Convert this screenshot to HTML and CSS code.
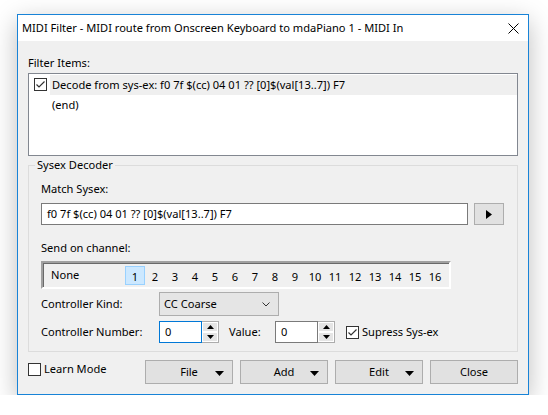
FILE: index.html
```html
<!DOCTYPE html>
<html lang="en">
  <head>
    <meta charset="UTF-8" />
    <title>MIDI Filter</title>
    <link rel="stylesheet" href="styles.css">
  </head>
  <body>
    <div class="dialog">
      <div class="titlebar">
        <span class="title">MIDI Filter - MIDI route from Onscreen Keyboard to mdaPiano 1 - MIDI In</span>
        <svg class="close-x" width="11" height="11" viewBox="0 0 11 11">
          <path d="M0.5 0.5L10.5 10.5M10.5 0.5L0.5 10.5" stroke="#000" stroke-width="1" fill="none" />
        </svg>
      </div>

      <div class="content">
        <div class="label first">Filter Items:</div>
        <div class="item-list">
          <div class="item">
            <span class="check">
              <svg width="13" height="13" viewBox="0 0 13 13"><path d="M2.5 6.5L5 9L10.5 3.5" stroke="#333" stroke-width="1.2" fill="none" /></svg>
            </span>
            <span class="item-text selected">Decode from sys-ex: f0 7f $(cc) 04 01 ?? [0]$(val[13..7]) F7</span>
          </div>
          <div class="item">
            <span class="check-space"></span>
            <span class="item-text">(end)</span>
          </div>
        </div>

        <fieldset class="group">
          <legend>Sysex Decoder</legend>

          <div class="label">Match Sysex:</div>
          <div class="match-row">
            <div class="textbox">f0 7f $(cc) 04 01 ?? [0]$(val[13..7]) F7</div>
            <button class="btn play">
              <svg width="6" height="9" viewBox="0 0 6 9"><path d="M0 0L6 4.5L0 9Z" fill="#000" /></svg>
            </button>
          </div>

          <div class="label channel-label">Send on channel:</div>
          <div class="channels">
            <span class="ch-none">None</span>
            <span class="ch active">1</span>
            <span class="ch">2</span>
            <span class="ch">3</span>
            <span class="ch">4</span>
            <span class="ch">5</span>
            <span class="ch">6</span>
            <span class="ch">7</span>
            <span class="ch">8</span>
            <span class="ch">9</span>
            <span class="ch">10</span>
            <span class="ch">11</span>
            <span class="ch">12</span>
            <span class="ch">13</span>
            <span class="ch">14</span>
            <span class="ch">15</span>
            <span class="ch">16</span>
          </div>

          <div class="form-row kind-row">
            <span class="form-label">Controller Kind:</span>
            <div class="combo">
              <span>CC Coarse</span>
              <svg width="8" height="5" viewBox="0 0 8 5"><path d="M0.5 0.5L4 4L7.5 0.5" stroke="#333" stroke-width="1" fill="none" /></svg>
            </div>
          </div>

          <div class="form-row number-row">
            <span class="form-label">Controller Number:</span>
            <div class="spin focused">
              <span class="spin-value">0</span>
              <span class="spin-btns">
                <span class="spin-btn"><svg width="7" height="4" viewBox="0 0 7 4"><path d="M3.5 0L7 4H0Z" fill="#000" /></svg></span>
                <span class="spin-btn"><svg width="7" height="4" viewBox="0 0 7 4"><path d="M0 0H7L3.5 4Z" fill="#000" /></svg></span>
              </span>
            </div>
            <span class="value-label">Value:</span>
            <div class="spin">
              <span class="spin-value">0</span>
              <span class="spin-btns">
                <span class="spin-btn"><svg width="7" height="4" viewBox="0 0 7 4"><path d="M3.5 0L7 4H0Z" fill="#000" /></svg></span>
                <span class="spin-btn"><svg width="7" height="4" viewBox="0 0 7 4"><path d="M0 0H7L3.5 4Z" fill="#000" /></svg></span>
              </span>
            </div>
            <label class="checkbox suppress">
              <span class="check">
                <svg width="13" height="13" viewBox="0 0 13 13"><path d="M2.5 6.5L5 9L10.5 3.5" stroke="#333" stroke-width="1.2" fill="none" /></svg>
              </span>
              Supress Sys-ex
            </label>
          </div>
        </fieldset>

        <div class="bottom-row">
          <label class="checkbox learn">
            <span class="check"></span>
            Learn Mode
          </label>
          <div class="buttons">
            <button class="btn menu-btn">File<svg width="9" height="5" viewBox="0 0 9 5"><path d="M0 0H9L4.5 5Z" fill="#000" /></svg></button>
            <button class="btn menu-btn">Add<svg width="9" height="5" viewBox="0 0 9 5"><path d="M0 0H9L4.5 5Z" fill="#000" /></svg></button>
            <button class="btn menu-btn">Edit<svg width="9" height="5" viewBox="0 0 9 5"><path d="M0 0H9L4.5 5Z" fill="#000" /></svg></button>
            <button class="btn">Close</button>
          </div>
        </div>
      </div>
    </div>
  </body>
</html>
```

FILE: styles.css
```css
* {
  box-sizing: border-box;
}

html,
body {
  margin: 0;
  padding: 0;
  background: #fff;
}

body {
  padding: 14px 0 0 17px;
  font-family: "Noto Sans", "Open Sans", sans-serif;
  font-size: 11.1px;
  line-height: 16px;
  color: #000;
}

.dialog {
  width: 512px;
  height: 381px;
  border: 1px solid #1883d7;
  background: #f0f0f0;
  box-shadow: 0 7px 24px rgba(0, 0, 0, 0.26);
  overflow: hidden;
}

.titlebar {
  height: 26px;
  background: #fff;
  display: flex;
  align-items: center;
  padding-left: 4px;
}

.title {
  flex: 1;
  white-space: nowrap;
  font-size: 11.1px;
}

.close-x {
  margin-right: 9px;
}

.content {
  padding: 0 10px 10px;
}

.label.first {
  margin-top: 14px;
}

/* filter item list */
.item-list {
  margin-top: 2px;
  height: 83px;
  background: #fff;
  border: 1px solid #828790;
}

.item {
  display: flex;
  align-items: center;
  height: 20px;
}

.item:first-child {
  height: 21px;
}

.item .check,
.check-space {
  margin-left: 5px;
  margin-right: 3px;
}

.check-space {
  width: 13px;
}

.item-text {
  flex: 1;
  height: 20px;
  line-height: 20px;
  padding-left: 2px;
}

.item-text.selected {
  background: #efefef;
}

.check {
  width: 13px;
  height: 13px;
  border: 1px solid #333;
  background: #fff;
  display: flex;
  align-items: center;
  justify-content: center;
  flex: none;
}

.check svg {
  display: block;
  margin: -1px;
}

/* sysex group */
.group {
  margin: 1px 0 0;
  border: 1px solid #dcdcdc;
  padding: 8px 13px 8px 12px;
  min-width: 0;
}

.group legend {
  padding: 0 2px;
  margin-left: -6px;
}

.match-row {
  display: flex;
  gap: 6px;
  margin-top: 6px;
}

.textbox {
  width: 427px;
  height: 22px;
  line-height: 20px;
  border: 1px solid #7a7a7a;
  background: #fff;
  padding-left: 5px;
  white-space: nowrap;
}

.btn {
  font: inherit;
  color: #000;
  background: #e1e1e1;
  border: 1px solid #adadad;
  padding: 0;
  display: flex;
  align-items: center;
  justify-content: center;
}

.play {
  width: 30px;
  height: 22px;
}

.channel-label {
  margin-top: 15px;
}

.channels {
  margin-top: 5px;
  width: 410px;
  height: 28px;
  border: 2px solid;
  border-color: #a0a0a0 #fff #fff #a0a0a0;
  box-shadow: inset 1px 1px 0 #696969;
  display: flex;
  align-items: center;
}

.ch-none {
  width: 82px;
  padding-left: 8px;
}

.ch {
  width: 20px;
  height: 19px;
  line-height: 19px;
  text-align: center;
  border: 1px solid transparent;
}

.ch.active {
  background: #cce8ff;
  border-color: #99d1ff;
}

/* controller rows */
.form-row {
  display: flex;
  align-items: center;
}

.form-label {
  width: 118px;
}

.kind-row {
  margin-top: 3px;
}

.combo {
  width: 120px;
  height: 24px;
  border: 1px solid #adadad;
  background: #e5e5e5;
  display: flex;
  align-items: center;
  justify-content: space-between;
  padding: 0 8px 0 4px;
}

.number-row {
  margin-top: 5px;
}

.spin {
  width: 60px;
  height: 22px;
  display: flex;
}

.spin-value {
  width: 43px;
  border: 1px solid #7a7a7a;
  background: #fff;
  padding-left: 5px;
  line-height: 20px;
}

.spin.focused .spin-value {
  border-color: #0078d7;
}

.spin-btns {
  width: 17px;
  border: 1px solid #acacac;
  border-left: none;
  display: flex;
  flex-direction: column;
  background: #fff;
}

.spin-btn {
  flex: 1;
  background: #e5e5e5;
  border: 1px solid #fff;
  display: flex;
  align-items: center;
  justify-content: center;
}

.value-label {
  width: 46px;
  margin-left: 10px;
}

.checkbox {
  display: flex;
  align-items: center;
  gap: 3px;
}

.suppress {
  margin-left: 11px;
}

/* bottom buttons */
.bottom-row {
  display: flex;
  align-items: center;
  justify-content: space-between;
  margin-top: 8px;
}

.learn {
  align-self: flex-start;
  margin-top: 1px;
}

.buttons {
  display: flex;
  gap: 7px;
}

.buttons .btn {
  width: 88px;
  height: 24px;
  position: relative;
}

.menu-btn svg {
  position: absolute;
  right: 8px;
  top: 10px;
}
```
